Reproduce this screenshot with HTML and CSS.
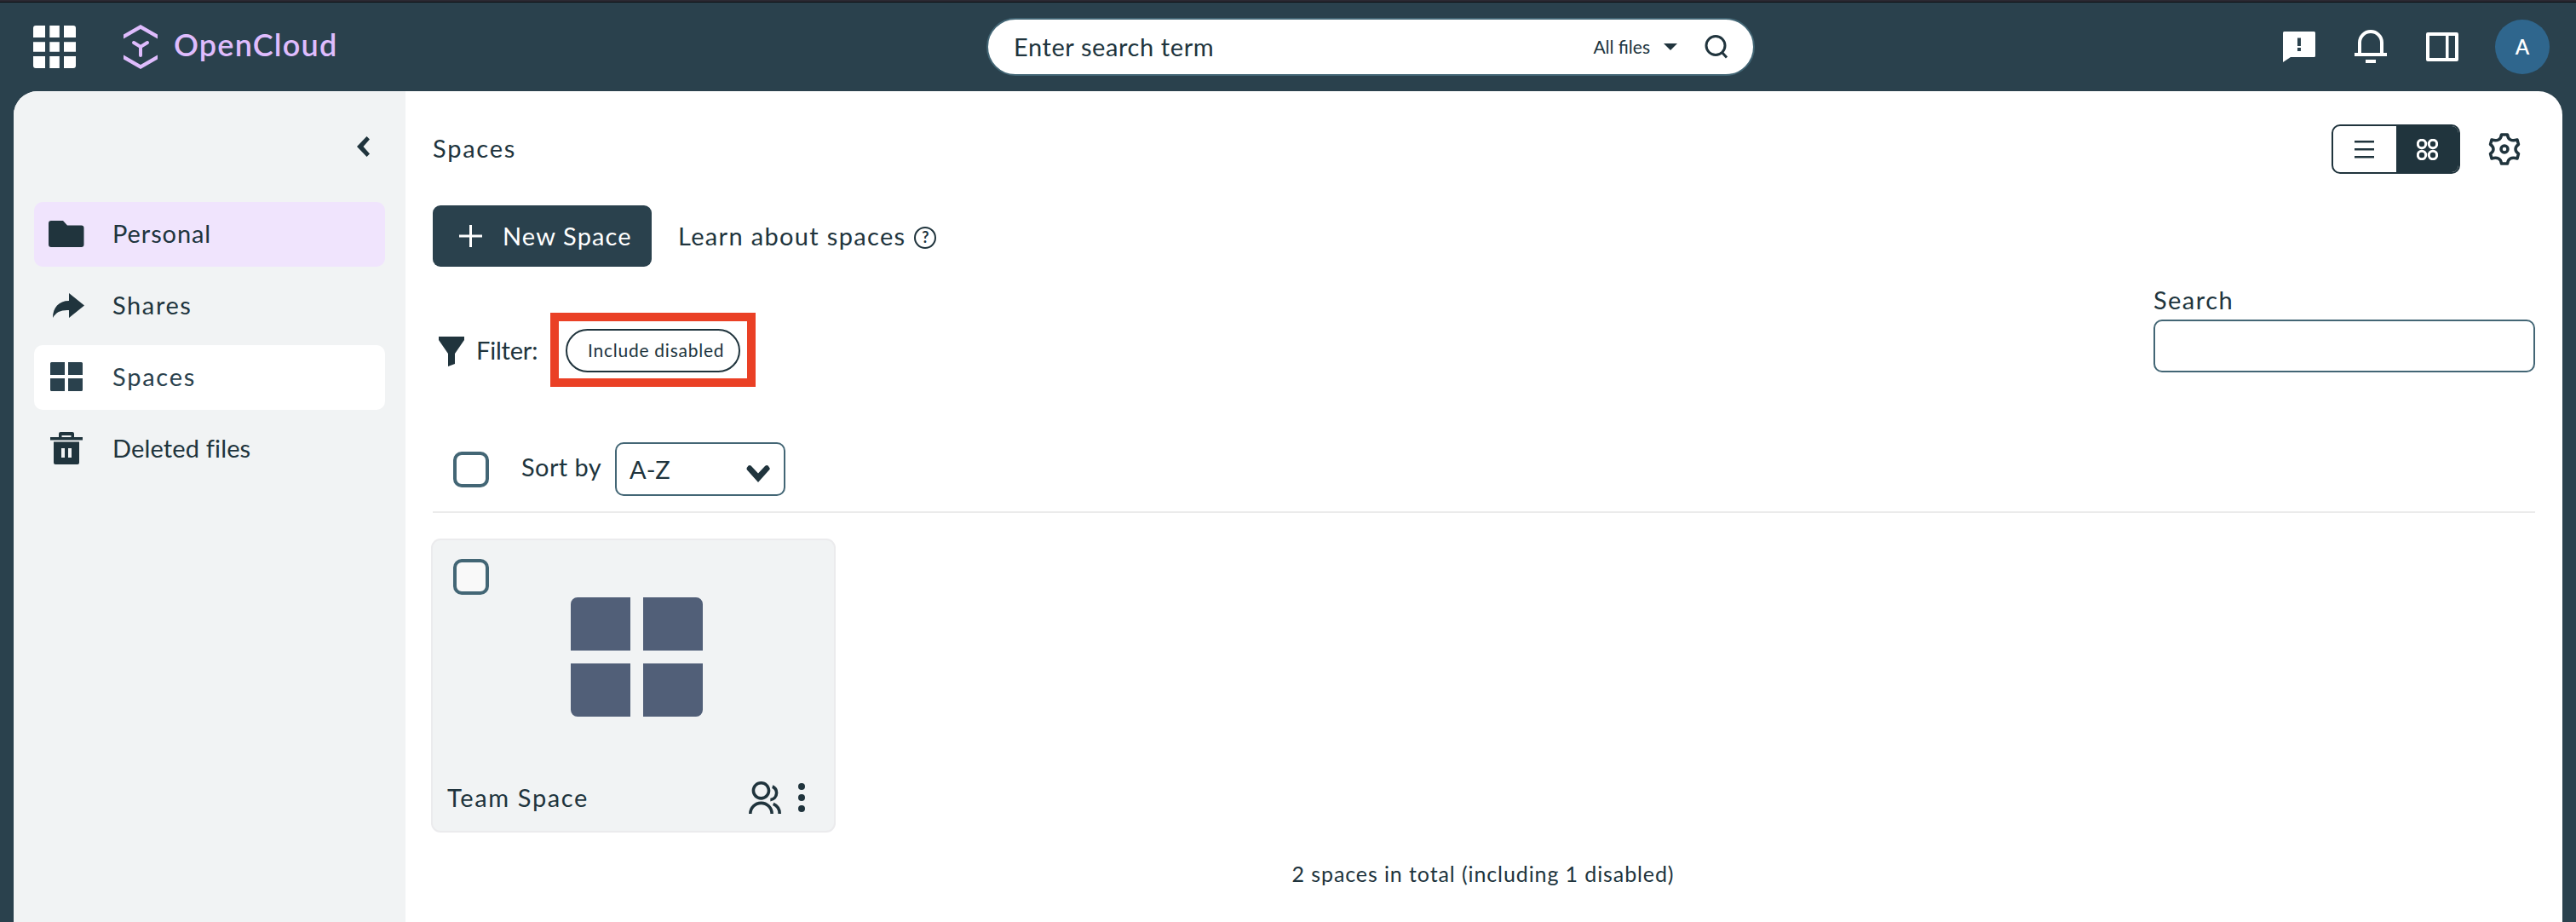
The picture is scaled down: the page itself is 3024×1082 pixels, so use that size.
FILE: index.html
```html
<!DOCTYPE html>
<html lang="en">
<head>
<meta charset="utf-8">
<title>Spaces - OpenCloud</title>
<link rel="stylesheet" href="styles.css">
</head>
<body>
<header class="topbar">
  <div class="brand">
    <svg class="apps" width="50" height="50" viewBox="0 0 50 50"><path d="M3 0h11v14H0V3a3 3 0 0 1 3-3zM19.300 0h11.500v14H19.300zM36 0h11a3 3 0 0 1 3 3v11H36zM0 19.300h14v11.500H0zM19.300 19.300h11.500v11.500H19.300zM36 19.300h14v11.500H36zM0 36h14v14H3a3 3 0 0 1-3-3zM19.300 36h11.500v14H19.300zM36 36h14v11a3 3 0 0 1-3 3H36z"/></svg>
    <svg class="logo-mark" width="40" height="52" viewBox="0 0 40 52"><path d="M0 11.500 20 0l20 11.500v5L20 5 0 16.500zM0 35.500 20 47l20-11.500v5L20 52 0 40.500z"/><path class="logo-y" d="M12 21l8 5 8-5M20 26v10"/></svg>
    <span class="logo-text">OpenCloud</span>
  </div>
  <div class="searchbar">
    <span class="search-hint">Enter search term</span>
    <span class="search-scope">All files</span>
    <svg class="scope-caret" width="16" height="8" viewBox="0 0 16 8"><path d="M0 0h16L8 8z"/></svg>
    <svg width="28" height="28" viewBox="0 0 28 28" class="line"><circle cx="13" cy="12.500" r="11"/><path d="M20.500 20.500l5.500 6"/></svg>
  </div>
  <div class="tools">
    <svg width="38" height="36" viewBox="0 0 38 36"><path fill-rule="evenodd" d="M1.500 0h35A1.500 1.500 0 0 1 38 1.500v27a1.500 1.500 0 0 1-1.500 1.500H9l-9 6V1.500A1.500 1.500 0 0 1 1.500 0zM17 7.500V17h4V7.500zM17 19v4h4v-4z"/></svg>
    <svg width="38" height="40" viewBox="0 0 38 40"><path fill-rule="evenodd" d="M4 27V15a15 15 0 0 1 30 0v12h4v4H0v-4zM8 27h22V15a11 11 0 0 0-22 0zM13 35h12v4H13z"/></svg>
    <svg width="38" height="34" viewBox="0 0 38 34"><path fill-rule="evenodd" d="M2 0h34a2 2 0 0 1 2 2v30a2 2 0 0 1-2 2H2a2 2 0 0 1-2-2V2a2 2 0 0 1 2-2zM4 4v26h19V4zM26.500 4v26H34V4z"/></svg>
    <span class="avatar">A</span>
  </div>
</header>
<div class="shell">
  <nav class="sidebar">
    <div class="collapse"><svg width="15" height="24" viewBox="0 0 15 24"><path d="M11.500 0 15 3.500 7.500 12 15 20.500 11.500 24 0 12z"/></svg></div>
    <a class="nav-item nav-personal"><span class="nav-icon"><svg width="42" height="31" viewBox="0 0 42 31"><path d="M3 0h14l5 5.500h16.500a3 3 0 0 1 3 3V28a3 3 0 0 1-3 3H3a3 3 0 0 1-3-3V3a3 3 0 0 1 3-3z"/></svg></span>Personal</a>
    <a class="nav-item nav-shares"><span class="nav-icon"><svg class="share" width="37" height="29" viewBox="0 0 37 29"><path d="M19 0l18 14.500L19 29v-9C10 19.500 4 22 0 29 0 17 7 9 19 9z"/></svg></span>Shares</a>
    <a class="nav-item nav-spaces"><span class="nav-icon"><svg width="38" height="34" viewBox="0 0 38 34"><path d="M1.500 0H17v15H0V1.500A1.500 1.500 0 0 1 1.500 0zM21 0h15.500A1.500 1.500 0 0 1 38 1.500V15H21zM0 19h17v15H1.500A1.500 1.500 0 0 1 0 32.500zM21 19h17v13.500a1.500 1.500 0 0 1-1.500 1.500H21z"/></svg></span>Spaces</a>
    <a class="nav-item nav-deleted"><span class="nav-icon"><svg width="38" height="38" viewBox="0 0 38 38"><path fill-rule="evenodd" d="M0 6h10V2a2 2 0 0 1 2-2h14a2 2 0 0 1 2 2v4h10v3.500H0zM13.500 4v2h11V4zM4 11.500h30V36a2 2 0 0 1-2 2H6a2 2 0 0 1-2-2zM13 19v11h4V19zM21 19v11h4V19z"/></svg></span>Deleted files</a>
  </nav>
  <main class="content">
    <div class="title-row">
      <h1>Spaces</h1>
      <div class="view-controls">
        <div class="toggle">
          <span class="toggle-list"><svg width="23" height="21" viewBox="0 0 23 21"><path d="M0 0h23v2.600H0zM0 9h23v2.600H0zM0 18h23v2.600H0z"/></svg></span>
          <span class="toggle-tiles"><svg class="line" width="25" height="25" viewBox="0 0 25 25"><circle cx="6" cy="6" r="4.700"/><circle cx="19" cy="6" r="4.700"/><circle cx="6" cy="19" r="4.700"/><circle cx="19" cy="19" r="4.700"/></svg></span>
        </div>
        <svg class="line gear" width="38" height="38" viewBox="-19 -19 38 38"><path d="M-3.500-17h7Q4-12.500 7-11T15-11L16.500-5.500Q13-3 13 0T16.500 5.500L15 11Q10 9.500 7 11T3.500 17h-7Q-4 12.500-7 11T-15 11L-16.500 5.500Q-13 3-13 0T-16.500-5.500L-15-11Q-10-9.500-7-11T-3.500-17z"/><circle r="4"/></svg>
      </div>
    </div>
    <div class="action-row">
      <button class="new-space"><svg width="27" height="26" viewBox="0 0 27 26"><path d="M12 0h3v11.500h12v3H15V26h-3V14.500H0v-3h12z"/></svg>New Space</button>
      <a class="learn">Learn about spaces</a>
      <span class="help">?</span>
    </div>
    <div class="filter-row">
      <svg class="funnel" width="30" height="35" viewBox="0 0 30 35"><path d="M0 0h30v4L19 20v12l-8 3V20L0 4z"/></svg>
      <span class="filter-label">Filter:</span>
      <div class="highlight"><span class="chip">Include disabled</span></div>
      <label class="space-search"><span class="search-label">Search</span><input type="text"></label>
    </div>
    <div class="sort-row">
      <span class="checkbox"></span>
      <span class="sort-label">Sort by</span>
      <div class="select"><span>A-Z</span><svg width="28" height="20" viewBox="0 0 28 20"><path d="M1 2.500Q3.500-1.500 6 1l8 8.500L22 1q3-2.500 5 1.500 1.500 1.500 0 3L14 20 1 5.500q-1-1.500 0-3z"/></svg></div>
    </div>
    <article class="card">
      <span class="checkbox"></span>
      <svg class="card-image" width="155" height="140" viewBox="0 0 155 140"><path d="M8 0h62v62.500H0V8a8 8 0 0 1 8-8zM85 0h62a8 8 0 0 1 8 8v54.500H85zM0 77.500h70V140H8a8 8 0 0 1-8-8zM85 77.500h70V132a8 8 0 0 1-8 8H85z"/></svg>
      <footer class="card-footer">
        <span class="card-name">Team Space</span>
        <svg class="members" width="38" height="38" viewBox="2 1 21 21"><path d="M2 22a8 8 0 1 1 16 0h-2a6 6 0 0 0-12 0H2zm8-9c-3.315 0-6-2.685-6-6s2.685-6 6-6 6 2.685 6 6-2.685 6-6 6zm0-2c2.210 0 4-1.790 4-4s-1.790-4-4-4-4 1.790-4 4 1.790 4 4 4zm8.284 3.703A8.002 8.002 0 0 1 23 22h-2a6.001 6.001 0 0 0-3.537-5.473l.820-1.824zm-.688-11.290A5.500 5.500 0 0 1 21 8.500a5.499 5.499 0 0 1-5 5.478v-2.013a3.500 3.500 0 0 0 1.041-6.609l.555-1.943z"/></svg>
        <svg class="dots" width="8" height="34" viewBox="0 0 8 34"><circle cx="4" cy="4" r="4"/><circle cx="4" cy="17" r="4"/><circle cx="4" cy="30" r="4"/></svg>
      </footer>
    </article>
    <p class="total">2 spaces in total (including 1 disabled)</p>
  </main>
</div>
</body>
</html>
```
FILE: styles.css
```css
* { box-sizing: border-box; }

body {
  margin: 0;
  height: 1082px;
  overflow: hidden;
  display: flex;
  flex-direction: column;
  background: #2a414d;
  color: #20343d;
  font: 29px/36px Lato, "Liberation Sans", sans-serif;
  letter-spacing: 0.9px;
}

svg { display: block; flex: none; fill: currentColor; }
.line { fill: none; stroke: currentColor; stroke-width: 3; }

/* Top bar */
.topbar {
  height: 107px;
  flex: none;
  border-top: 2px solid #2b2932;
  box-shadow: inset 0 1px #0d1012;
  display: grid;
  grid-template-columns: 1158px 902px 1fr;
  align-items: center;
  padding: 1px 31px 0 0;
  color: #fff;
}
.brand { display: flex; align-items: center; padding-left: 39px; }
.logo-mark { margin-left: 56px; color: #dfbcfd; }
.logo-y { fill: none; stroke: currentColor; stroke-width: 4; stroke-linecap: round; }
.logo-text {
  margin-left: 19px;
  color: #dfbcfd;
  font-size: 36px;
  font-weight: 600;
  letter-spacing: 1.2px;
  padding-bottom: 6px;
}
.searchbar {
  height: 68px;
  border: 2px solid #436675;
  border-radius: 34px;
  background: #fff;
  color: #20343d;
  display: flex;
  align-items: center;
  padding: 0 29px 0 30px;
}
.search-hint { flex: 1; letter-spacing: 0.6px; padding-bottom: 1px; }
.search-scope { font-size: 21px; letter-spacing: 0; margin-right: 16px; }
.scope-caret { margin-right: 32px; }
.tools { display: flex; align-items: center; justify-content: flex-end; gap: 46px; }
.avatar {
  width: 64px;
  height: 64px;
  border-radius: 50%;
  margin-left: -3px;
  background: #2f668d;
  display: flex;
  align-items: center;
  justify-content: center;
  font-size: 24px;
  font-weight: 600;
  letter-spacing: 0;
}

/* Page frame */
.shell {
  flex: 1;
  display: flex;
  margin: 0 16px;
  border-radius: 28px 28px 0 0;
  overflow: hidden;
  background: #fff;
}
.sidebar {
  width: 460px;
  flex: none;
  padding: 0 24px;
  background: #f1f3f4;
  display: flex;
  flex-direction: column;
  gap: 8px;
}
.collapse { height: 122px; padding: 53px 18px 0 0; display: flex; justify-content: flex-end; align-items: flex-start; }
.nav-item { height: 76px; border-radius: 10px; display: flex; align-items: center; padding-bottom: 2px; }
.nav-icon { width: 76px; display: flex; justify-content: center; margin-right: 16px; }
.nav-personal { background: #f0e4fd; }
.nav-shares { letter-spacing: 1.6px; }
.nav-spaces { background: #fff; color: #2a414d; letter-spacing: 1.75px; }
.nav-deleted { letter-spacing: 0.15px; }
.share { margin-left: 4px; }

/* Main area */
.content { flex: 1; padding: 39px 32px 0 30px; display: flex; flex-direction: column; }
.title-row { display: flex; justify-content: space-between; align-items: center; height: 58px; padding-left: 2px; }
h1 { margin: 0; font: inherit; letter-spacing: 1.75px; padding-bottom: 3px; }
.view-controls { display: flex; align-items: center; gap: 33px; margin-right: 17px; }
.toggle { width: 151px; height: 58px; border: 2px solid #20343d; border-radius: 10px; display: flex; overflow: hidden; }
.toggle-list, .toggle-tiles { flex: 1; display: flex; align-items: center; justify-content: center; }
.toggle-tiles { background: #20343d; color: #fff; }
.gear { stroke-width: 3.500; stroke-linejoin: round; }
.action-row { display: flex; align-items: center; margin-top: 37px; padding-left: 2px; }
.new-space {
  width: 257px;
  height: 72px;
  border: 0;
  border-radius: 9px;
  background: #2a414d;
  color: #fff;
  font: inherit;
  letter-spacing: 1.15px;
  display: flex;
  align-items: center;
  gap: 24px;
  padding: 0 0 0 31px;
  white-space: nowrap;
}
.learn { margin-left: 31px; letter-spacing: 1.33px; }
.help {
  width: 26px;
  height: 26px;
  margin: 4px 0 0 10px;
  border: 2.500px solid #20343d;
  border-radius: 50%;
  font-size: 18px;
  font-weight: 700;
  line-height: 21px;
  letter-spacing: 0;
  text-align: center;
}
.filter-row { display: flex; height: 87px; margin-top: 54px; align-items: center; padding-left: 9px; }
.funnel { margin-right: 14px; margin-top: 3px; }
.filter-label { width: 87px; white-space: nowrap; letter-spacing: -0.2px; }
.highlight { width: 241px; height: 87px; border: 10px solid #ea4025; padding: 9px 8px; }
.chip {
  width: 205px;
  height: 51px;
  display: flex;
  align-items: center;
  border: 2px solid #20343d;
  border-radius: 26px;
  padding: 0 0 2px 24px;
  font-size: 21px;
  letter-spacing: 0.75px;
  white-space: nowrap;
}
.space-search { margin: -51px 0 0 auto; display: flex; flex-direction: column; }
.search-label { height: 41px; letter-spacing: 1.45px; }
.space-search input { width: 448px; height: 62px; border: 2px solid #436675; border-radius: 10px; background: #fff; padding: 0 14px; font: inherit; }
.sort-row {
  height: 148px;
  margin-left: 2px;
  padding: 65px 0 0 24px;
  border-bottom: 2px solid #ebebeb;
  display: flex;
  align-items: flex-start;
}
.checkbox { width: 42px; height: 42px; flex: none; border: 4px solid #436675; border-radius: 10px; background: #fff; }
.sort-row .checkbox { margin-top: 11px; }
.sort-label { width: 110px; margin: 11px 0 0 38px; white-space: nowrap; letter-spacing: 0.4px; }
.select {
  width: 200px;
  height: 63px;
  border: 2px solid #436675;
  border-radius: 10px;
  display: flex;
  align-items: center;
  justify-content: space-between;
  padding: 0 16px 0 15px;
  letter-spacing: 0;
}
.select svg { margin-top: 10px; }
.card {
  width: 475px;
  height: 345px;
  flex: none;
  margin-top: 30px;
  padding: 22px 24px 0;
  border: 2px solid #ebebed;
  border-radius: 11px;
  background: #f1f3f4;
  display: flex;
  flex-direction: column;
}
.card .checkbox { background: #f9f9f9; }
.card-image { align-self: center; margin-top: 3px; margin-left: 7px; color: #515f78; }
.card-footer { display: flex; align-items: center; margin: 76px 10px 0 -7px; }
.card-name { flex: 1; letter-spacing: 1.65px; }
.dots { margin-left: 20px; }
.total { margin: 30px 0 0; text-align: center; font-size: 25px; letter-spacing: 0.9px; }
```
